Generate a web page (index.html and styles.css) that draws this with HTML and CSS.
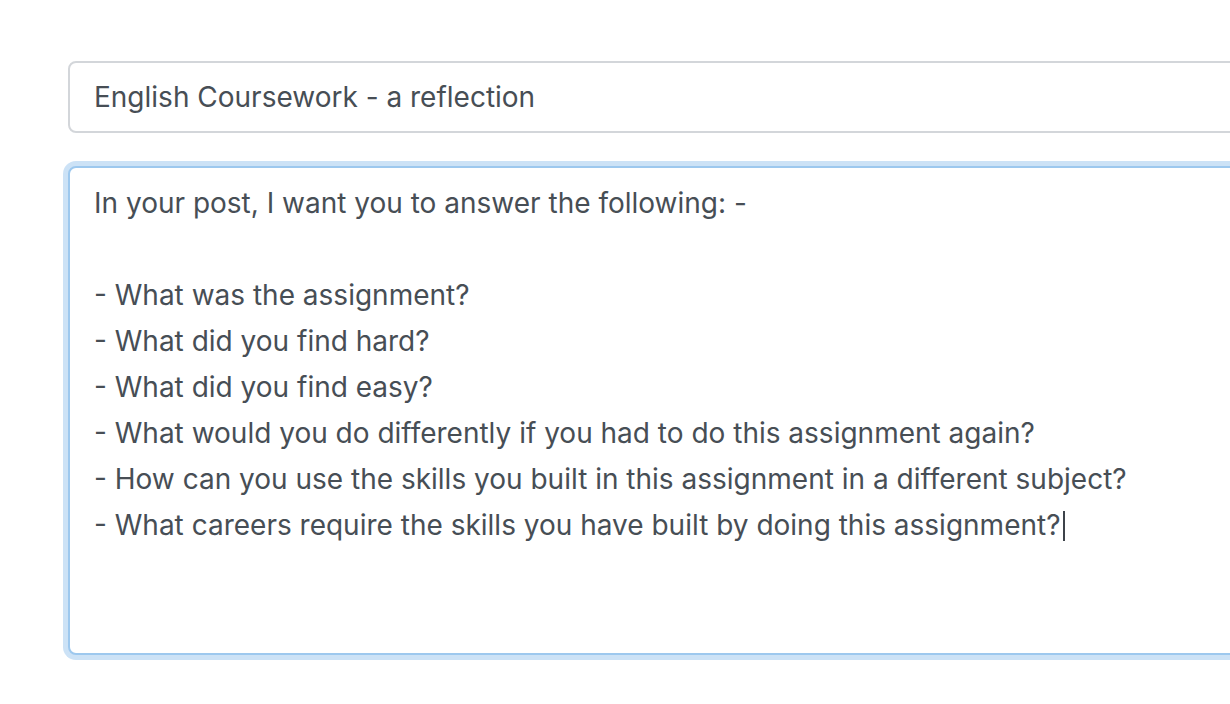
FILE: index.html
```html
<!DOCTYPE html>
<html lang="en">
<head>
<meta charset="utf-8">
<title>Post editor</title>
<link rel="stylesheet" href="styles.css">
</head>
<body>
<main class="editor">
  <input class="title-input" type="text" value="English Coursework - a reflection">
  <div class="body-input" role="textbox" aria-multiline="true">In your post, I want you to answer the following: -

- What was the assignment?
- What did you find hard?
- What did you find easy?
- What would you do differently if you had to do this assignment again?
- How can you use the skills you built in this assignment in a different subject?
- What careers require the skills you have built by doing this assignment?<span class="caret"></span></div>
</main>
</body>
</html>
```

FILE: styles.css
```css
html, body {
  margin: 0;
  padding: 0;
  background: #ffffff;
  overflow: hidden;
}

.editor {
  display: flex;
  flex-direction: column;
  gap: 33px;
  padding: 61px 0 60px 68px;
  width: 1240px;
}

.title-input,
.body-input {
  box-sizing: border-box;
  width: 100%;
  font-family: Inter, "Noto Sans", sans-serif;
  font-size: 28px;
  color: #474e55;
  background: #ffffff;
  border-radius: 8px;
}

.title-input {
  height: 72px;
  padding: 0 24px;
  border: 2px solid #d3d6da;
  outline: none;
  line-height: 44px;
}

.body-input {
  height: 489px;
  padding: 12px 24px;
  border: 2px solid #9dc8ee;
  box-shadow: 0 0 0 5px #cce2f6;
  line-height: 46px;
  white-space: pre-wrap;
}

.caret {
  display: inline-block;
  width: 0;
  height: 30px;
  border-left: 2px solid #3d434a;
  margin-left: 3px;
  vertical-align: -6px;
}
```
